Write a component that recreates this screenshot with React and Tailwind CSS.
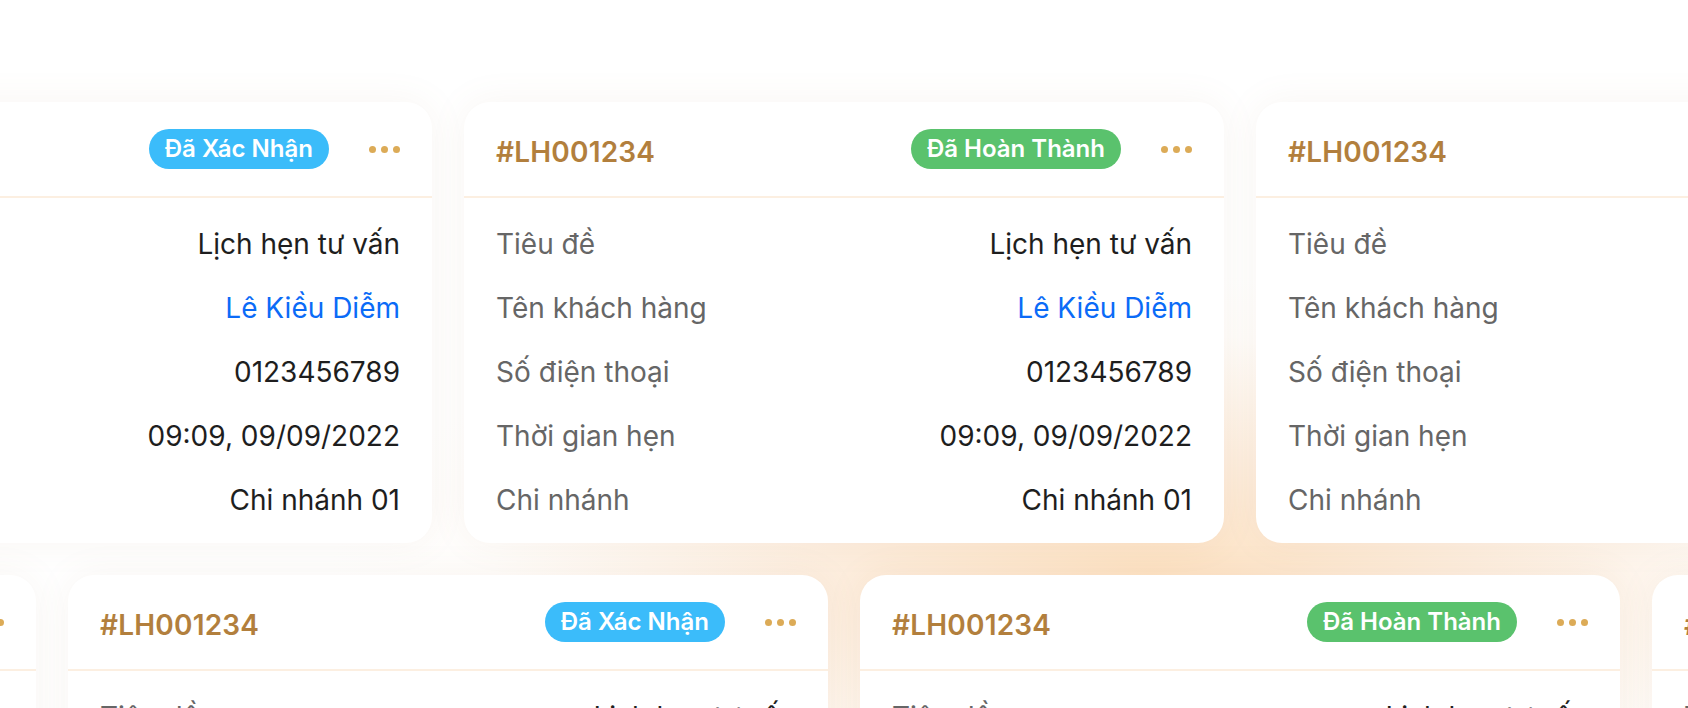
const fields = [
  { label: 'Tiêu đề', value: 'Lịch hẹn tư vấn' },
  { label: 'Tên khách hàng', value: 'Lê Kiều Diễm', link: true },
  { label: 'Số điện thoại', value: '0123456789' },
  { label: 'Thời gian hẹn', value: '09:09, 09/09/2022' },
  { label: 'Chi nhánh', value: 'Chi nhánh 01' },
]

const statuses = {
  confirmed: { text: 'Đã Xác Nhận', cls: 'bg-[#3bbcfa]' },
  done: { text: 'Đã Hoàn Thành', cls: 'bg-[#5ac26d]' },
}

function Dots() {
  return (
    <div className="flex items-center gap-[5px]">
      <span className="w-[7px] h-[7px] rounded-full bg-[#dcab57]" />
      <span className="w-[7px] h-[7px] rounded-full bg-[#dcab57]" />
      <span className="w-[7px] h-[7px] rounded-full bg-[#dcab57]" />
    </div>
  )
}

function AppointmentCard({ status }) {
  const s = statuses[status]
  return (
    <div className="w-[760px] shrink-0 rounded-[26px] bg-white shadow-[0_0_36px_rgba(170,130,90,0.08)]">
      <div className="h-[96px] flex items-center justify-between px-8 border-b-2 border-[#fcefe1]">
        <span className="mt-[5px] text-[28px] font-semibold text-[#b27f3d] tracking-[0.2px]">#LH001234</span>
        <div className="flex items-center gap-[40px]">
          <span className={`h-10 px-4 rounded-full flex items-center text-[24px] font-semibold text-white ${s.cls}`}>
            {s.text}
          </span>
          <Dots />
        </div>
      </div>
      <div className="px-8 pt-[26px] pb-[23px] flex flex-col gap-6">
        {fields.map((f) => (
          <div key={f.label} className="flex items-center justify-between text-[28px] leading-10">
            <span className="text-[#666666]">{f.label}</span>
            <span className={f.link ? 'text-[#0b6bf7]' : 'text-[#1e1e1e]'}>{f.value}</span>
          </div>
        ))}
      </div>
    </div>
  )
}

export default function App() {
  return (
    <div
      className="w-[1688px] h-[708px] overflow-hidden bg-white bg-[radial-gradient(ellipse_820px_300px_at_1150px_575px,#fde2c3_0%,#fdeedf_40%,#fffdfb_80%,#ffffff_100%)] pt-[102px] flex flex-col gap-8"
      style={{ fontFamily: 'Inter, "Noto Sans", sans-serif' }}
    >
      <div className="flex gap-8 -ml-[328px]">
        <AppointmentCard status="confirmed" />
        <AppointmentCard status="done" />
        <AppointmentCard status="confirmed" />
      </div>
      <div className="flex gap-8 -ml-[724px]">
        <AppointmentCard status="done" />
        <AppointmentCard status="confirmed" />
        <AppointmentCard status="done" />
        <AppointmentCard status="confirmed" />
      </div>
    </div>
  )
}
